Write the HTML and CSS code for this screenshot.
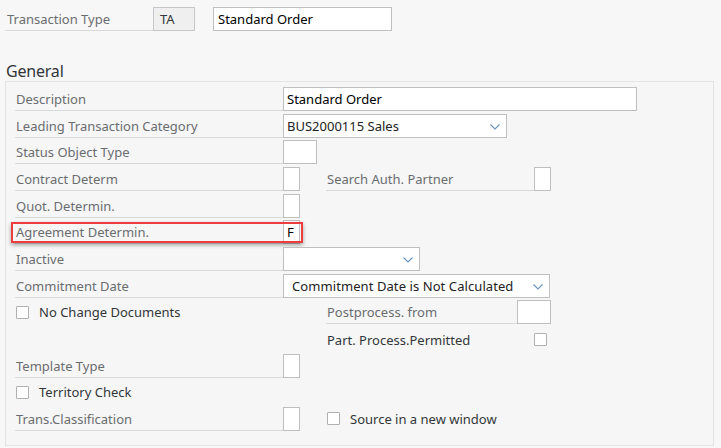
FILE: index.html
```html
<!DOCTYPE html>
<html lang="en">
<head>
    <meta charset="UTF-8">
    <meta name="viewport" content="width=device-width, initial-scale=1.0">
    <title>Transaction Type TA</title>
    <link rel="stylesheet" href="styles.css">
</head>
<body>
    <div class="head-row">
        <div class="head-label">Transaction Type</div>
        <div class="head-key">TA</div>
        <div class="head-text">Standard Order</div>
    </div>

    <h2 class="group-title">General</h2>

    <div class="panel">
        <div class="row">
            <div class="lbl">Description</div>
            <div class="field w-desc">Standard Order</div>
        </div>
        <div class="row">
            <div class="lbl">Leading Transaction Category</div>
            <div class="field select w-lead">BUS2000115 Sales
                <svg class="chev" width="10" height="6" viewBox="0 0 10 6"><polyline points="0.5,0.5 5,5 9.5,0.5"/></svg>
            </div>
        </div>
        <div class="row">
            <div class="lbl">Status Object Type</div>
            <div class="field w-mid"></div>
        </div>
        <div class="row">
            <div class="left">
                <div class="lbl">Contract Determ</div>
                <div class="field w-one"></div>
            </div>
            <div class="right">
                <div class="lbl-r">Search Auth. Partner</div>
                <div class="field w-one"></div>
            </div>
        </div>
        <div class="row">
            <div class="lbl">Quot. Determin.</div>
            <div class="field w-one"></div>
        </div>
        <div class="row">
            <div class="lbl">Agreement Determin.</div>
            <div class="field w-one">F</div>
            <div class="highlight"></div>
        </div>
        <div class="row">
            <div class="lbl">Inactive</div>
            <div class="field select w-inact">
                <svg class="chev" width="10" height="6" viewBox="0 0 10 6"><polyline points="0.5,0.5 5,5 9.5,0.5"/></svg>
            </div>
        </div>
        <div class="row">
            <div class="lbl">Commitment Date</div>
            <div class="field select w-commit">Commitment Date is Not Calculated
                <svg class="chev" width="10" height="6" viewBox="0 0 10 6"><polyline points="0.5,0.5 5,5 9.5,0.5"/></svg>
            </div>
        </div>
        <div class="row">
            <div class="left">
                <label class="check"><span class="box"></span>No Change Documents</label>
            </div>
            <div class="right">
                <div class="lbl-r">Postprocess. from</div>
                <div class="field w-mid"></div>
            </div>
        </div>
        <div class="row">
            <div class="left"></div>
            <div class="right plain">
                <div class="lbl-plain">Part. Process.Permitted</div>
                <span class="box"></span>
            </div>
        </div>
        <div class="row">
            <div class="lbl">Template Type</div>
            <div class="field w-one"></div>
        </div>
        <div class="row">
            <label class="check"><span class="box"></span>Territory Check</label>
        </div>
        <div class="row">
            <div class="left">
                <div class="lbl">Trans.Classification</div>
                <div class="field w-one"></div>
            </div>
            <div class="right">
                <label class="check"><span class="box"></span>Source in a new window</label>
            </div>
        </div>
    </div>
</body>
</html>
```

FILE: styles.css
```css
body {
    margin: 0;
    background: #f7f7f7;
    font-family: "Noto Sans", "Liberation Sans", Arial, sans-serif;
    font-size: 13px;
    color: #32363a;
}

.head-row {
    display: flex;
    margin: 7px 0 0 5px;
    height: 24px;
}

.head-label {
    width: 146px;
    padding-left: 2px;
    height: 23px;
    line-height: 24px;
    border-bottom: 1px solid #d9d9d9;
    color: #6a6d70;
}

.head-key {
    width: 34px;
    height: 22px;
    line-height: 23px;
    padding-left: 6px;
    background: #efefef;
    border: 1px solid #c6c6c6;
    color: #32363a;
}

.head-text {
    width: 173px;
    margin-left: 18px;
    height: 22px;
    line-height: 23px;
    padding-left: 4px;
    background: #fff;
    border: 1px solid #bfbfbf;
    color: #000;
}

.group-title {
    margin: 30px 0 0 6px;
    height: 20px;
    line-height: 20px;
    font-size: 16px;
    font-weight: normal;
    letter-spacing: -0.2px;
    color: #32363a;
}

.panel {
    margin-left: 5px;
    width: 698px;
    padding: 5px 0 11px 9px;
    border: 1px solid #e3e3e3;
    background: #f6f6f6;
}

.row {
    position: relative;
    display: flex;
    align-items: flex-start;
    height: 26.67px;
}

.left {
    display: flex;
    width: 311px;
}

.lbl {
    width: 267px;
    height: 23px;
    line-height: 24px;
    padding-left: 1px;
    border-bottom: 1px solid #d9d9d9;
    color: #6a6d70;
    white-space: nowrap;
}

.field {
    box-sizing: border-box;
    height: 24px;
    line-height: 23px;
    padding-left: 3px;
    background: #fff;
    border: 1px solid #bfbfbf;
    color: #000;
    white-space: nowrap;
}

.select {
    position: relative;
    color: #222;
}

.chev {
    position: absolute;
    right: 6px;
    top: 9px;
    fill: none;
    stroke: #6b93c0;
    stroke-width: 1.1;
}

.w-desc { width: 354px; }
.w-lead { width: 224px; }
.w-mid { width: 34px; }
.w-one { width: 17px; padding-left: 3px; }
.w-inact { width: 137px; }
.w-commit { width: 267px; padding-left: 8px; letter-spacing: 0.08px; }

.right {
    display: flex;
    width: 225px;
}

.lbl-r {
    flex: 1;
    height: 23px;
    line-height: 24px;
    padding-left: 1px;
    border-bottom: 1px solid #d9d9d9;
    color: #6a6d70;
    white-space: nowrap;
}

.right.plain {
    align-items: center;
    height: 26px;
}

.lbl-plain {
    flex: 1;
    padding-left: 1px;
    color: #32363a;
}

.right.plain .box {
    margin-right: 4px;
}

.check {
    display: flex;
    align-items: center;
    height: 24px;
    color: #32363a;
    white-space: nowrap;
}

.box {
    display: inline-block;
    box-sizing: border-box;
    width: 13px;
    height: 13px;
    margin: 0 10px 0 1px;
    background: #fff;
    border: 1px solid #b0b0b0;
    border-radius: 1px;
}

.highlight {
    position: absolute;
    left: -4px;
    top: 2px;
    width: 292px;
    height: 21px;
    box-sizing: border-box;
    border: 2px solid #ee3d3f;
    box-shadow: 0 2px 4px rgba(0, 0, 0, 0.35);
}
```
